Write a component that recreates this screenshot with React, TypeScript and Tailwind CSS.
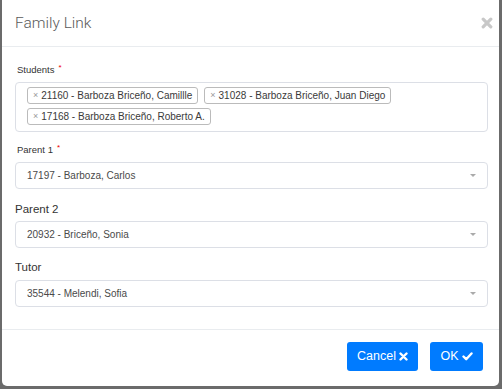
import React from "react";

const students = [
  "21160 - Barboza Briceño, Camillle",
  "31028 - Barboza Briceño, Juan Diego",
  "17168 - Barboza Briceño, Roberto A.",
];

function Caret() {
  return (
    <svg width="6" height="3" viewBox="0 0 6 3" className="shrink-0">
      <path d="M0 0 L6 0 L3 3 Z" fill="#aaa" />
    </svg>
  );
}

function SelectBox({ value }: { value: string }) {
  return (
    <div className="h-[27px] border border-[#dcdfe6] rounded-[4px] flex items-center justify-between pl-[11px] pr-[11px] text-[10px] text-[#4a4a4a]">
      <span>{value}</span>
      <Caret />
    </div>
  );
}

function SmallLabel({ text, required }: { text: string; required?: boolean }) {
  return (
    <div className="h-[14px] leading-[14px] text-[9.5px] text-[#333] pl-[2px] flex">
      <span>{text}</span>
      {required && <span className="text-[#e00] text-[8px] leading-[10px] ml-[4px]">*</span>}
    </div>
  );
}

export default function App() {
  return (
    <div
      className="w-[502px] h-[389px] bg-[#6b6b6b] pl-[2px] overflow-hidden"
      style={{ fontFamily: '"Liberation Sans", Arial, sans-serif' }}
    >
      <div className="w-[497px] h-[386px] bg-white rounded-b-[5px] flex flex-col">
        {/* header */}
        <div className="h-[47px] border-b border-[#e9ecef] flex items-center justify-between pl-[13px] pr-[6px] pt-[2px]">
          <span
            className="text-[15.5px] font-light text-[#5a5a5a]"
            style={{ fontFamily: "Roboto, sans-serif" }}
          >
            Family Link
          </span>
          <svg width="12" height="12" viewBox="0 0 12 12" className="mb-[3px]">
            <path d="M2.2 2.2 L9.8 9.8 M9.8 2.2 L2.2 9.8" stroke="#c8c8c8" strokeWidth="3.2" strokeLinecap="round" />
          </svg>
        </div>

        {/* body */}
        <div className="h-[282px] pl-[13px] pr-[11px] pt-[16px]">
          <SmallLabel text="Students" required />
          <div className="mt-[5px] h-[50px] border border-[#dcdfe6] rounded-[4px] pl-[11px] pt-[4px] flex flex-wrap content-start gap-x-[6px] gap-y-[4px]">
            {students.map((s) => (
              <div
                key={s}
                className="h-[17px] border border-[#bbb] rounded-[3px] px-[5px] flex items-center text-[10px] text-[#3a3a3a]"
              >
                <span className="text-[#999] text-[9px] mr-[3px]">×</span>
                <span>{s}</span>
              </div>
            ))}
          </div>

          <div className="mt-[11px]">
            <SmallLabel text="Parent 1" required />
          </div>
          <div className="mt-[5px]">
            <SelectBox value="17197 - Barboza, Carlos" />
          </div>

          <div className="mt-[12px] h-[16px] leading-[16px] text-[11.5px] text-[#333]">Parent 2</div>
          <div className="mt-[4px]">
            <SelectBox value="20932 - Briceño, Sonia" />
          </div>

          <div className="mt-[11px] h-[16px] leading-[16px] text-[11.5px] text-[#333]">Tutor</div>
          <div className="mt-[5px]">
            <SelectBox value="35544 - Melendi, Sofia" />
          </div>
        </div>

        {/* footer */}
        <div className="border-t border-[#e9ecef] flex justify-end gap-[12px] pr-[16px] pt-[12px]">
          <button className="w-[71px] h-[29px] bg-[#007bff] rounded-[3px] text-white text-[12.5px] flex items-center justify-center gap-[3px]">
            <span>Cancel</span>
            <svg width="9" height="9" viewBox="0 0 9 9">
              <path d="M1.5 1.5 L7.5 7.5 M7.5 1.5 L1.5 7.5" stroke="#fff" strokeWidth="2.4" strokeLinecap="round" />
            </svg>
          </button>
          <button className="w-[53px] h-[29px] bg-[#007bff] rounded-[3px] text-white text-[12.5px] flex items-center justify-center gap-[3px]">
            <span>OK</span>
            <svg width="11" height="9" viewBox="0 0 11 9">
              <path d="M1.5 4.5 L4.2 7.2 L9.5 1.5" stroke="#fff" strokeWidth="2.4" fill="none" strokeLinecap="round" strokeLinejoin="round" />
            </svg>
          </button>
        </div>
      </div>
    </div>
  );
}
